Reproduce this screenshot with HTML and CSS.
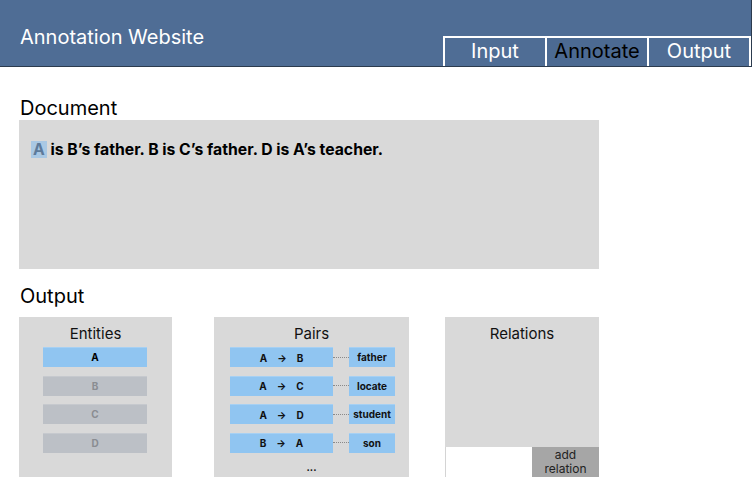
FILE: index.html
```html
<!DOCTYPE html>
<html>
<head>
<meta charset="utf-8">
<link rel="stylesheet" href="styles.css">
</head>
<body>
<header class="topbar">
  <div class="brand">Annotation Website</div>
  <nav class="tabs">
    <div class="tab">Input</div>
    <div class="tab active">Annotate</div>
    <div class="tab">Output</div>
  </nav>
</header>
<main class="main">
  <h2 class="section-title">Document</h2>
  <div class="doc">
    <p class="doc-text"><span class="mark">A</span> is B’s father. B is C’s father. D is A’s teacher.</p>
  </div>
  <h2 class="section-title out-title">Output</h2>
  <div class="outputs">
    <section class="panel entities">
      <h3 class="panel-title">Entities</h3>
      <div class="list">
        <div class="item on">A</div>
        <div class="item off">B</div>
        <div class="item off">C</div>
        <div class="item off">D</div>
      </div>
    </section>
    <section class="panel pairs">
      <h3 class="panel-title">Pairs</h3>
      <div class="list">
        <div class="pair"><div class="pair-box"><span>A</span><span>→</span><span>B</span></div><div class="dots"></div><div class="rel">father</div></div>
        <div class="pair"><div class="pair-box"><span>A</span><span>→</span><span>C</span></div><div class="dots"></div><div class="rel">locate</div></div>
        <div class="pair"><div class="pair-box"><span>A</span><span>→</span><span>D</span></div><div class="dots"></div><div class="rel">student</div></div>
        <div class="pair"><div class="pair-box"><span>B</span><span>→</span><span>A</span></div><div class="dots"></div><div class="rel">son</div></div>
      </div>
      <div class="more">...</div>
    </section>
    <section class="panel relations">
      <div class="rel-area">
        <h3 class="panel-title">Relations</h3>
      </div>
      <div class="rel-foot">
        <div class="rel-input"></div>
        <div class="add-btn">add<br>relation</div>
      </div>
    </section>
  </div>
</main>
</body>
</html>
```

FILE: styles.css
```css
* { box-sizing: border-box; }
html, body { margin: 0; padding: 0; background: #fff; }
body { font-family: Inter, "Noto Sans", sans-serif; color: #111; width: 752px; height: 488px; overflow: hidden; }

.topbar {
  height: 67px;
  background: #4f6d95;
  border-bottom: 1px solid #2c3b4e;
  border-right: 1px solid #2c3b4e;
  display: flex;
  align-items: flex-end;
}
.brand {
  color: #fff;
  font-size: 20px;
  line-height: 24px;
  padding-left: 20px;
  margin-bottom: 17px;
}
.tabs {
  margin-left: auto;
  display: flex;
  height: 30px;
}
.tab {
  width: 104px;
  height: 30px;
  border: 2px solid #fff;
  border-bottom: none;
  margin-left: -2px;
  color: #fff;
  font-size: 20px;
  line-height: 27px;
  text-align: center;
}
.tab:first-child { margin-left: 0; }
.tab.active { color: #000; background: #4c6a92; }

.main { padding-left: 19px; }
.section-title {
  margin: 0;
  font-weight: 400;
  font-size: 20px;
  line-height: 24px;
  color: #000;
  padding: 29px 0 0 1px;
  height: 53px;
}
.doc {
  width: 580px;
  height: 149px;
  background: #d9d9d9;
  padding: 21px 0 0 12px;
}
.doc-text {
  margin: 0;
  font-weight: 700;
  font-size: 15.75px;
  line-height: 17px;
  color: #000;
}
.mark {
  display: inline-block;
  background: #a9c8e4;
  color: #5d7a9a;
  padding: 0 2px 0 2px;
  height: 17px;
}
.out-title { padding-top: 15px; height: 48px; }

.outputs { display: flex; align-items: flex-start; }
.panel {
  height: 160px;
  background: #d9d9d9;
}
.entities { width: 153px; }
.pairs { width: 195px; margin-left: 42px; padding-left: 16px; }
.relations { width: 154px; margin-left: 36px; background: transparent; display: flex; flex-direction: column; }
.panel-title {
  margin: 0;
  font-weight: 400;
  font-size: 15px;
  line-height: 18px;
  color: #111;
  text-align: center;
  padding-top: 8px;
  height: 30px;
}
.pairs .panel-title { padding-right: 16px; }
.list { display: flex; flex-direction: column; gap: 8.6px; }
.entities .list { padding-left: 24px; }
.item {
  width: 104px;
  height: 20px;
  font-size: 10px;
  font-weight: 700;
  line-height: 20px;
  text-align: center;
}
.item.on { background: #90c5f1; color: #000; border-top: 1px solid #a6d0f3; line-height: 18px; }
.item.off { background: #bcc0c6; color: #8a8d92; border-top: 1px solid #c6c9ce; line-height: 18px; }

.pair { display: flex; align-items: center; height: 20px; }
.pair-box {
  width: 103px;
  height: 20px;
  background: #90c5f1;
  border-top: 1px solid #a6d0f3;
  display: flex;
  justify-content: center;
  align-items: center;
  gap: 10px;
  font-size: 10px;
  font-weight: 700;
  color: #111;
}
.dots { width: 16px; border-top: 1px dotted #8a8a8a; }
.rel {
  width: 46px;
  height: 20px;
  background: #90c5f1;
  border-top: 1px solid #a6d0f3;
  font-size: 10px;
  font-weight: 700;
  line-height: 18px;
  text-align: center;
  color: #111;
}
.more {
  font-size: 10px;
  font-weight: 700;
  text-align: center;
  padding-right: 16px;
  margin-top: 7px;
  line-height: 14px;
}

.rel-area { background: #d9d9d9; height: 130px; }
.rel-foot { display: flex; height: 30px; }
.rel-input { flex: 1; background: #fff; border-left: 1px solid #d4d4d4; }
.add-btn {
  width: 67px;
  background: #a6a6a6;
  color: #222;
  font-size: 12px;
  line-height: 14px;
  text-align: center;
  padding-top: 1px;
}
```
